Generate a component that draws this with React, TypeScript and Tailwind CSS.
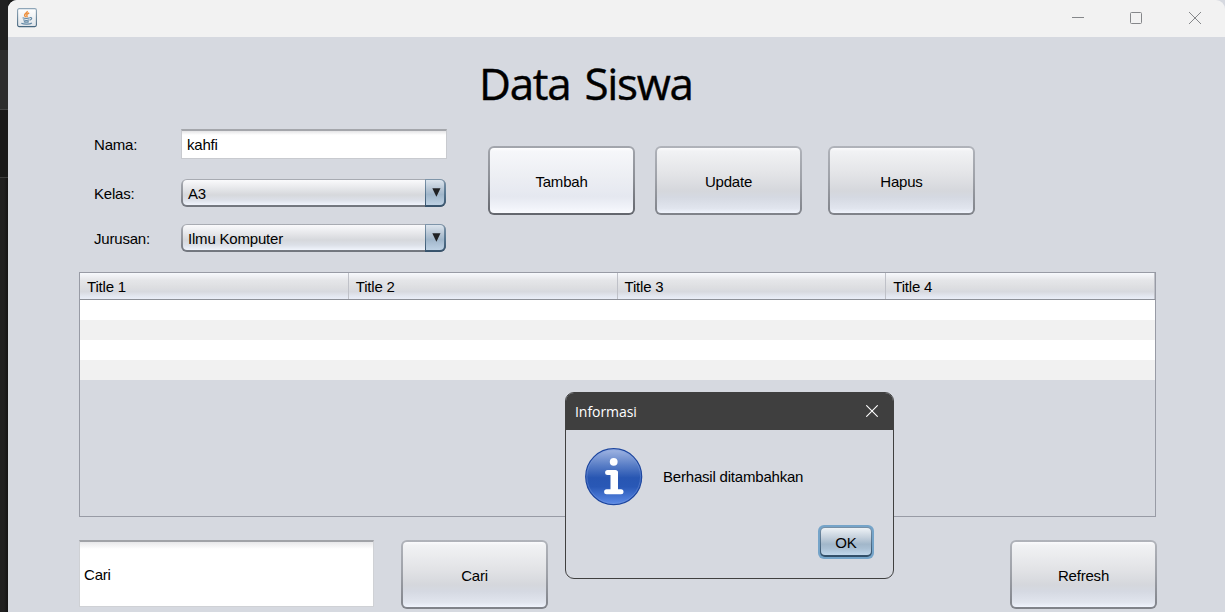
import type { ReactNode } from 'react';

type NimbusButtonProps = { children: ReactNode; bright?: boolean };

function NimbusButton({ children, bright = false }: NimbusButtonProps) {
  const frame = bright
    ? 'bg-[linear-gradient(180deg,#a3a6ad,#8b8e95_50%,#63666d)]'
    : 'bg-[linear-gradient(180deg,#b0b3ba,#9da0a7_50%,#7f8289)]';
  const face = bright
    ? 'bg-[linear-gradient(180deg,#ffffff_0%,#f6f7fa_5%,#eceef3_45%,#e5e8f0_75%,#f2f4fa_93%,#fafbff_100%)]'
    : 'bg-[linear-gradient(180deg,#fbfbfd_0%,#f1f2f4_5%,#e3e4e7_40%,#d5d7dc_66%,#d5d9e2_76%,#e1e5ee_93%,#f0f4fd_100%)]';
  return (
    <button type="button" className={`flex h-[69px] w-[147px] shrink-0 rounded-[6px] p-[2px] ${frame}`}>
      <span className={`flex h-full w-full items-center justify-center rounded-[4px] pt-[2px] ${face}`}>{children}</span>
    </button>
  );
}

function Combo({ value }: { value: string }) {
  return (
    <div className="flex h-[28px] w-[265px] rounded-[6px] bg-[linear-gradient(180deg,#a9acb3,#92959c_50%,#71757d)] p-[2px] pt-px">
      <div className="flex flex-1 items-center rounded-l-[4px] bg-[linear-gradient(180deg,#fafafc,#e8e9ec_30%,#d6d8dc_60%,#dce0e8_80%,#f0f4fc)] pl-[5px] pt-[3px]">
        {value}
      </div>
      <div className="-mt-px -mr-[2px] -mb-[2px] flex w-[21px] rounded-r-[6px] bg-[linear-gradient(180deg,#8096aa,#587791_50%,#36516a)] pt-px pr-[2px] pb-[2px] pl-px">
        <div className="flex flex-1 items-center justify-center rounded-r-[4px] bg-[linear-gradient(180deg,#dce5ee,#b7c6d5_35%,#a0b6ca_58%,#bdd1e4)]">
          <svg width="9" height="9" viewBox="0 0 9 9" className="ml-[3px]"><path d="M.3.3h8.2L4.4 8.7z" fill="#202224" /></svg>
        </div>
      </div>
    </div>
  );
}

function JavaIcon() {
  return (
    <svg width="20" height="20" viewBox="0 0 20 20">
      <defs>
        <linearGradient id="tile" x1="0" y1="0" x2="0" y2="1">
          <stop offset="0" stopColor="#ffffff" />
          <stop offset="1" stopColor="#dfe4e9" />
        </linearGradient>
        <linearGradient id="tileEdge" x1="0" y1="0" x2="0" y2="1">
          <stop offset="0" stopColor="#8fa6b8" />
          <stop offset="1" stopColor="#47677f" />
        </linearGradient>
      </defs>
      <rect x=".6" y=".6" width="18.8" height="18" rx="1.6" fill="url(#tile)" stroke="url(#tileEdge)" strokeWidth="1.1" />
      <path d="M10.2 3c.9 1.5-3 2.6-2.6 4.4.1.7.8 1.2 1.2 1.8M12.2 5c-2 .8-3 1.7-2.2 2.8.4.6.1 1-.4 1.6" fill="none" stroke="#ee8f3c" strokeWidth="1.4" />
      <path d="M5.6 9.8c2 .7 5.4.7 7.2 0M6.2 11.8c1.8.8 4.6.8 6.2 0M6.8 13.6c1.4.6 3.6.6 5 0M13 9.6c2.4-.5 2.2 1.8-.2 2.6M4.3 15.3c2.8 1.3 8.6 1.1 10.6-.3" fill="none" stroke="#6389a6" strokeWidth="1.15" />
    </svg>
  );
}

function InfoIcon() {
  return (
    <svg width="58" height="58" viewBox="0 0 58 58">
      <defs>
        <linearGradient id="disc" x1="0" y1="0" x2="0" y2="1">
          <stop offset="0" stopColor="#a3b7e3" />
          <stop offset=".3" stopColor="#587dc6" />
          <stop offset=".52" stopColor="#2856b2" />
          <stop offset=".68" stopColor="#2958b6" />
          <stop offset="1" stopColor="#5e8ce8" />
        </linearGradient>
      </defs>
      <circle cx="28.7" cy="28.7" r="28" fill="url(#disc)" stroke="#1d469f" strokeWidth="1.2" />
      <circle cx="28.7" cy="28.7" r="26.9" fill="none" stroke="#7e9ee0" strokeOpacity=".5" strokeWidth=".8" />
      <circle cx="28.7" cy="13.8" r="3.9" fill="#fff" />
      <path d="M22.6 24.5h7.8v19.3M21.6 43.8h14.4" fill="none" stroke="#fff" strokeWidth="5" strokeLinecap="round" strokeLinejoin="round" />
      <path d="M25.5 23.5h7.5v20h-7.5z" fill="#fff" />
    </svg>
  );
}

function TitleBar() {
  return (
    <header className="flex h-[37px] shrink-0 items-start justify-between rounded-tr-[9px] bg-[#f2f2f2] pl-[9px] pt-2 text-[#85878a]">
      <JavaIcon />
      <svg width="140" height="20" viewBox="0 0 140 20" fill="none" stroke="currentColor" className="mr-[17px]">
        <path d="M4 9.5h12" />
        <rect x="62.5" y="4.5" width="11" height="11" rx="1" />
        <path d="m121 4 12 12m0-12-12 12" />
      </svg>
    </header>
  );
}

function StudentTable() {
  return (
    <section className="flex h-[245px] w-[1077px] flex-col border border-[#989ba5]">
      <div className="grid h-[27px] grid-cols-4 border-b border-[#8d9098] bg-[linear-gradient(180deg,#f7f9fd_0%,#e5e6e9_28%,#dddee1_55%,#d7d9df_72%,#e2e6ef_88%,#eaeef8_100%)]">
        {['Title 1', 'Title 2', 'Title 3', 'Title 4'].map((t) => (
          <div key={t} className="flex items-center border-r border-[#bfc1c8] pl-[7px] pt-[2px]">{t}</div>
        ))}
      </div>
      <div className="h-5 bg-white" />
      <div className="h-5 bg-[#f1f1f1]" />
      <div className="h-5 bg-white" />
      <div className="h-5 bg-[#f1f1f1]" />
    </section>
  );
}

function Dialog() {
  return (
    <div role="dialog" className="absolute left-[565px] top-[392px] flex h-[187px] w-[329px] flex-col overflow-hidden rounded-[9px] border border-[#404040] bg-[#d6d9e0]">
      <div className="flex h-[37px] shrink-0 items-center justify-between bg-[#3f3f3f] pl-[9px] pr-[15px] text-white">
        <span className="font-['Open_Sans',sans-serif] text-[14px] tracking-[-0.05px]">Informasi</span>
        <svg width="12" height="12" viewBox="0 0 12 12" fill="none" stroke="currentColor" strokeWidth="1.1" className="mb-[2px]"><path d="m.3.3 11.4 11.4m0-11.4L.3 11.7" /></svg>
      </div>
      <div className="flex items-center gap-[20px] pl-[19px] pt-[18px]">
        <InfoIcon />
        <span>Berhasil ditambahkan</span>
      </div>
      <div className="flex justify-end pr-[19px] pt-[19px]">
        <button type="button" className="flex h-[34px] w-[56px] rounded-[6px] bg-[#75a4c9] p-[2px]">
          <span className="flex flex-1 rounded-[5px] bg-[linear-gradient(180deg,#7891a7,#55728c_50%,#304d67)] p-px pb-[2px]">
            <span className="flex flex-1 items-center justify-center rounded-[4px] bg-[linear-gradient(180deg,#edf2f6,#c4d0dc_35%,#a2b7ca_60%,#a9bfd3_75%,#c1d7eb)] pt-[2px]">OK</span>
          </span>
        </button>
      </div>
    </div>
  );
}

export default function App() {
  return (
    <div className="relative flex h-[612px] w-[1225px] overflow-hidden bg-[#1b1b1b] font-['Liberation_Sans',Arial,sans-serif] text-[15px] leading-5 tracking-[-0.2px] text-black">
      <div className="flex w-2 shrink-0 flex-col">
        <div className="h-[50px] bg-[#202020]" />
        <div className="h-[60px] border-b border-[#444] bg-[#2d2d2d]" />
        <div className="h-[68px] border-b border-[#3c3c3c] bg-[#191919]" />
        <div className="flex-1 bg-[linear-gradient(90deg,#202020_4px,#141414)]" />
      </div>
      <div className="flex flex-1 flex-col overflow-hidden rounded-tl-[9px] bg-[#d6d9e0]">
        <TitleBar />
        <h1 className="mt-[15px] h-[63px] pl-[471px] font-['Open_Sans','Noto_Sans',sans-serif] text-[44px] leading-[62px] tracking-[-1.3px] [word-spacing:4px] [-webkit-text-stroke:0.4px_black]">Data Siswa</h1>
        <div className="mt-[14px] flex h-[123px] pl-[86px]">
          <div className="flex w-[353px] flex-col">
            <div className="flex h-[30px] items-center">
              <label className="w-[87px] pt-[2px]">Nama:</label>
              <div className="flex h-[30px] w-[266px] items-center border border-t-2 border-[#c8cacf] border-t-[#a4a6ab] bg-[linear-gradient(180deg,#e4e4e6,#fff_4px)] pl-[5px]">kahfi</div>
            </div>
            <div className="mt-[20px] flex h-[28px] items-center">
              <label className="w-[87px] pt-[2px]">Kelas:</label>
              <Combo value="A3" />
            </div>
            <div className="mt-[17px] flex h-[28px] items-center">
              <label className="w-[87px] pt-[2px]">Jurusan:</label>
              <Combo value="Ilmu Komputer" />
            </div>
          </div>
          <div className="ml-[41px] flex pt-[17px]">
            <NimbusButton bright>Tambah</NimbusButton>
            <div className="ml-[20px]"><NimbusButton>Update</NimbusButton></div>
            <div className="ml-[26px]"><NimbusButton>Hapus</NimbusButton></div>
          </div>
        </div>
        <div className="mt-[20px] pl-[71px]">
          <StudentTable />
        </div>
        <div className="mt-[23px] flex pl-[71px]">
          <div className="flex h-[67px] w-[295px] items-center border border-t-2 border-[#cfd1d5] border-t-[#a1a3a8] bg-[linear-gradient(180deg,#e8e8ea,#fff_7px)] pl-[4px] pt-px">Cari</div>
          <div className="ml-[27px]"><NimbusButton>Cari</NimbusButton></div>
          <div className="ml-[462px]"><NimbusButton>Refresh</NimbusButton></div>
        </div>
      </div>
      <Dialog />
    </div>
  );
}
